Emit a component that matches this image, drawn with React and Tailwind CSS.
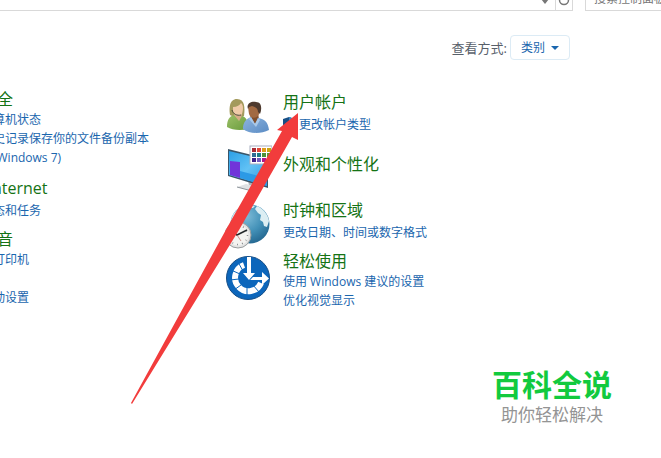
import { RotateCw } from 'lucide-react';

function UsersIcon() {
  return (
    <svg viewBox="0 0 48 48" className="w-12 h-12" aria-hidden="true">
      <defs>
        <linearGradient id="greenTop" x1="0" y1="0" x2="1" y2="1">
          <stop offset="0" stopColor="#9cc068" />
          <stop offset="1" stopColor="#6a9c3c" />
        </linearGradient>
        <linearGradient id="blueTop" x1="0" y1="0" x2="1" y2="1">
          <stop offset="0" stopColor="#8db4df" />
          <stop offset="1" stopColor="#5b8cc4" />
        </linearGradient>
      </defs>
      {/* woman */}
      <path d="M6 24 C5 18 5 8 13 8 C21 8 21 17 20 25 L14 28 Z" fill="#a39a5c" />
      <path d="M10 20 L17 20 L18 28 L14 31 L10 26 Z" fill="#d8ac88" />
      <path d="M9 16 C13 16 16 14 17 12 C20 14 19 20 18 23 C15 26 10 24 9 20 Z" fill="#efcaa8" />
      <path d="M3 36 C3 28 6 25 10 24 L15 30 L18 25 C22 26 24 29 24 38 C16 40 8 39 3 36 Z" fill="url(#greenTop)" />
      <path d="M8 19 C9 23 13 25 17 24" fill="none" stroke="#454a38" strokeWidth="1" />
      {/* man */}
      <path d="M27 21 L34 21 L35 29 L31 33 L26 28 Z" fill="#80502f" />
      <path d="M24 16 C25 11 36 11 36 17 L35 23 C33 28 27 28 25 23 Z" fill="#a26a42" />
      <path d="M24 18 C22 13 27 10 32 11 C38 11 38 18 36 23 L34 21 C34 17 31 16 28 15 L25 16 Z" fill="#4e3a2e" />
      <path d="M19 38 C19 31 22 28 27 26 L31 33 L34 27 C41 28 44 31 45 39 C37 43 25 43 19 38 Z" fill="url(#blueTop)" />
      <path d="M27 26 L31 33 L34 27 L36 29 L32 36 L25 28 Z" fill="#a9c8e8" />
    </svg>
  );
}

const swatches = [
  ['#a92a34', '#e04637', '#de9a18', '#c9a40f'],
  ['#2d6d96', '#1b7c86', '#4c9136', '#589b2c'],
  ['#3d2188', '#7059bd', '#b1178a', '#96256e'],
];

function DisplayIcon() {
  return (
    <svg viewBox="0 0 48 48" className="w-12 h-12" aria-hidden="true">
      <defs>
        <linearGradient id="screen" x1="0" y1="0" x2="1" y2="1">
          <stop offset="0" stopColor="#2b9fe6" />
          <stop offset="0.5" stopColor="#62c2f5" />
          <stop offset="1" stopColor="#2a94e0" />
        </linearGradient>
      </defs>
      <path d="M24 36 L32 38 L32 43 L25 42 Z" fill="#aeb4ba" />
      <path d="M13 43 L22 40 L38 44 L28 47 Z" fill="#dfe2e4" />
      <path d="M13 43 L28 47 L38 44" fill="none" stroke="#8d949a" strokeWidth="1" />
      <path d="M4 5 L44 15 L44 44 L4 32 Z" fill="#3a5568" />
      <path d="M5 7 L43 16 L43 42 L5 31 Z" fill="url(#screen)" />
      <path d="M6 17 L16 18 L16 34 L6 31 Z" fill="#7134d9" />
      <path d="M16 27 L43 34 L43 42 L16 34 Z" fill="#2c9ae6" />
      <rect x="26" y="2" width="22" height="18" fill="#fff" stroke="#a7aebf" />
      {swatches.map((row, y) =>
        row.map((color, x) => (
          <rect key={`${x}-${y}`} x={28 + x * 5} y={4 + y * 5} width="4" height="4" fill={color} />
        ))
      )}
    </svg>
  );
}

function ClockIcon() {
  return (
    <svg viewBox="0 0 48 48" className="w-12 h-12" aria-hidden="true">
      <defs>
        <radialGradient id="globe" cx="0.4" cy="0.3" r="0.75">
          <stop offset="0" stopColor="#7fbcd8" />
          <stop offset="0.55" stopColor="#4391b8" />
          <stop offset="1" stopColor="#22658e" />
        </radialGradient>
      </defs>
      <circle cx="26" cy="22" r="19.5" fill="url(#globe)" />
      <path d="M8 15 C11 8 17 4 23 3 L22 7 L18 10 L16 16 L10 20 L7 18 Z" fill="#d5e8ef" />
      <path d="M33 4 C40 7 44 13 45 19 L43 25 L40 24 L39 20 L36 18 L37 13 L34 11 L31 7 Z" fill="#dceef3" />
      <path d="M27 3 L31 4 L29 6 L26 6 Z" fill="#d5e8ef" />
      <circle cx="14" cy="33" r="13" fill="#e4e4e4" stroke="#999c9e" strokeWidth="1" />
      <circle cx="14" cy="33" r="10.5" fill="#f4f3f1" />
      <circle cx="14" cy="33" r="9.5" fill="none" stroke="#70777b" strokeWidth="1.5" strokeDasharray="0.8 4.17" />
      <path d="M8 29 L13 33 L23 28" fill="none" stroke="#25292c" strokeWidth="1.5" />
      <path d="M13 33 L17 39" stroke="#b96a61" strokeWidth="0.7" />
    </svg>
  );
}

function EaseIcon() {
  return (
    <svg viewBox="0 0 48 48" className="w-12 h-12" aria-hidden="true">
      <circle cx="24" cy="24" r="21.5" fill="#0c66bb" stroke="#164e86" strokeWidth="1" />
      <path d="M20 11 A13.5 13.5 0 1 0 37 29" fill="none" stroke="#fff" strokeWidth="6" />
      <path d="M14 8 L19 17 M7 16 L16 20 M6 26 L15 25 M10 36 L17 31 M23 42 L23 33 M35 38 L29 31" stroke="#0c66bb" strokeWidth="1" />
      <path d="M23 3 H27 V19 H31 L25 26 L19 19 H23 Z" fill="#fff" />
      <path d="M29 23 H38 V18 L45 24.5 L38 31 V26 H26 Z" fill="#fff" />
    </svg>
  );
}

function ShieldIcon() {
  return (
    <svg viewBox="0 0 16 16" className="w-4 h-4 shrink-0" aria-hidden="true">
      <path d="M0 2 L6 0 L12 2 V7 C12 10 9 12 6 13 C3 12 0 10 0 7 Z" fill="#174f86" />
      <path d="M6 0 L12 2 V6 H6 Z" fill="#388ac9" />
    </svg>
  );
}

const leftGroups = [
  { title: '全', links: ['算机状态', '史记录保存你的文件备份副本', '(Windows 7)'], box: 'h-[89px]', head: '-ml-[3px]', list: '' },
  { title: 'nternet', links: ['态和任务'], box: 'h-[51px]', head: '-ml-2', list: 'pt-0.5' },
  { title: '音', links: ['打印机', '动设置'], box: 'h-20', head: '-ml-[3px]', list: 'gap-[19px]' },
];

const rightGroups = [
  { title: '用户帐户', links: ['更改帐户类型'], Icon: UsersIcon, box: 'h-[53px]', icon: '', text: '', list: 'pt-0.5', shield: true },
  { title: '外观和个性化', links: [], Icon: DisplayIcon, box: 'h-[55px]', icon: '', text: 'pt-[9px]', list: '' },
  { title: '时钟和区域', links: ['更改日期、时间或数字格式'], Icon: ClockIcon, box: 'h-[51px]', icon: 'pt-[3px]', text: '', list: 'pt-0.5' },
  { title: '轻松使用', links: ['使用 Windows 建议的设置', '优化视觉显示'], Icon: EaseIcon, box: 'h-[60px]', icon: 'pt-1', text: '', list: '' },
];

function Title({ children }) {
  return (
    <h2 className="text-base leading-[22px] text-[#157315] whitespace-nowrap">
      <a href="#" className="hover:underline">{children}</a>
    </h2>
  );
}

function TaskLink({ children, shield }) {
  return (
    <li className="flex items-center text-xs leading-[19px] text-[#1a66ae] whitespace-nowrap">
      {shield && <ShieldIcon />}
      <a href="#" className="hover:underline">{children}</a>
    </li>
  );
}

export default function App() {
  return (
    <div className="relative min-h-screen overflow-hidden bg-white font-['Open_Sans','Noto_Sans_CJK_SC',sans-serif]">
      {/* Address and search bars */}
      <header className="flex h-[11px] items-end overflow-hidden">
        <div className="flex h-6 flex-1 border-b border-r border-[#d9d9d9]">
          <input aria-label="地址" className="min-w-0 flex-1 outline-none" />
          <button aria-label="展开" className="flex w-5 items-end justify-center pb-1.5">
            <svg viewBox="0 0 8 5" className="h-[5px] w-2"><path d="M0 0 H8 L4 5 Z" fill="#777" /></svg>
          </button>
          <button aria-label="刷新" className="flex w-[17px] items-end justify-center border-l border-[#d9d9d9] pb-1">
            <RotateCw className="h-3 w-3 text-[#777]" strokeWidth={3} />
          </button>
        </div>
        <input
          aria-label="搜索"
          placeholder="搜索控制面板"
          className="ml-3 h-6 w-[76px] border-b border-l border-[#d9d9d9] pl-2 text-xs outline-none placeholder:text-[#777]"
        />
      </header>

      {/* View mode */}
      <div className="flex items-center justify-end gap-[3px] pt-6 pr-[91px] text-[#58606a]">
        <span id="view-label" className="text-[13px] leading-5">查看方式:</span>
        <button
          aria-labelledby="view-label"
          className="flex h-[25px] w-[60px] items-center justify-center gap-1.5 rounded-sm border border-[#dcebf5] text-xs text-[#1a66ae]"
        >
          类别
          <svg viewBox="0 0 8 4" className="h-1 w-2"><path d="M0 0 H8 L4 4 Z" fill="#1a66ae" /></svg>
        </button>
      </div>

      {/* Categories */}
      <main className="flex pt-7">
        <div className="w-[224px] shrink-0">
          {leftGroups.map((group) => (
            <section key={group.title} className={group.box}>
              <div className={group.head}><Title>{group.title}</Title></div>
              <ul className={`-ml-[7px] flex flex-col ${group.list}`}>
                {group.links.map((link) => <TaskLink key={link}>{link}</TaskLink>)}
              </ul>
            </section>
          ))}
        </div>
        <div className="flex-1 pt-[3px]">
          {rightGroups.map(({ title, links, Icon, box, icon, text, list, shield }) => (
            <section key={title} className={`flex gap-[11px] ${box}`}>
              <div className={`shrink-0 ${icon}`}><Icon /></div>
              <div className={text}>
                <Title>{title}</Title>
                <ul className={list}>
                  {links.map((link) => <TaskLink key={link} shield={shield}>{link}</TaskLink>)}
                </ul>
              </div>
            </section>
          ))}
        </div>
      </main>

      {/* Pointer arrow over the list */}
      <svg viewBox="0 0 170 292" className="pointer-events-none absolute left-[130px] top-[113px] h-[292px] w-[170px]" aria-hidden="true">
        <path d="M168 0 L147 17 L152 18 L98 113 L1 290 L2 291 L109 117 L162 24 L168 27 Z" fill="#f23c3c" />
      </svg>

      {/* Watermark */}
      <div className="pointer-events-none absolute bottom-[31px] right-[49px] text-center whitespace-nowrap">
        <p className="text-[30px] leading-9 font-bold text-[#12ca3e]">百科全说</p>
        <p className="text-[17px] leading-6 text-[#949494]">助你轻松解决</p>
      </div>
    </div>
  );
}
